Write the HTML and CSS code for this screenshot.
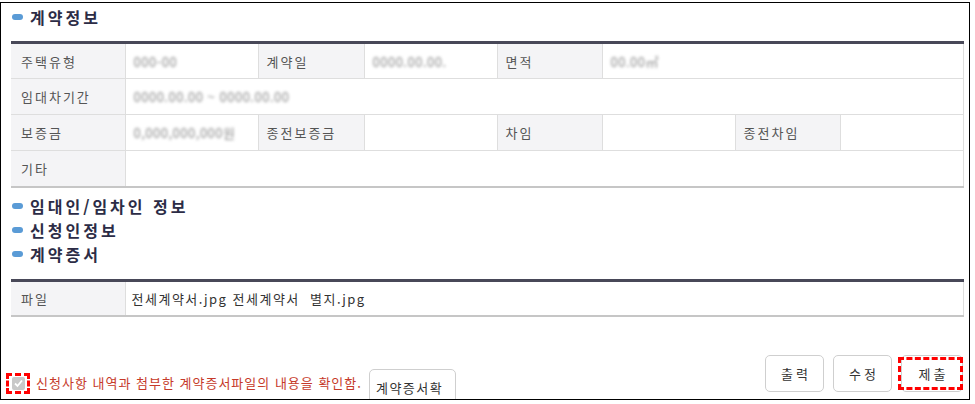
FILE: index.html
```html
<!DOCTYPE html>
<html lang="ko">
<head>
<meta charset="utf-8">
<link rel="stylesheet" href="styles.css">
</head>
<body>
<div class="frame">
  <h2 class="sec first">계약정보</h2>
  <table class="grid">
    <colgroup>
      <col style="width:114px"><col style="width:133px"><col style="width:106px"><col style="width:133px">
      <col style="width:105px"><col style="width:133px"><col style="width:105px"><col style="width:123px">
    </colgroup>
    <tr>
      <th>주택유형</th><td><span class="blur">000-00</span></td>
      <th>계약일</th><td><span class="blur">0000.00.00.</span></td>
      <th>면적</th><td colspan="3"><span class="blur">00.00㎡</span></td>
    </tr>
    <tr>
      <th>임대차기간</th><td colspan="7"><span class="blur">0000.00.00 ~ 0000.00.00</span></td>
    </tr>
    <tr>
      <th>보증금</th><td><span class="blur">0,000,000,000원</span></td>
      <th>종전보증금</th><td></td>
      <th>차임</th><td></td>
      <th>종전차임</th><td></td>
    </tr>
    <tr>
      <th>기타</th><td colspan="7"></td>
    </tr>
  </table>
  <div class="secs">
    <h2 class="sec">임대인/임차인 정보</h2>
    <h2 class="sec">신청인정보</h2>
    <h2 class="sec">계약증서</h2>
  </div>
  <table class="grid files">
    <colgroup><col style="width:114px"><col style="width:838px"></colgroup>
    <tr><th>파일</th><td class="dark">전세계약서.jpg 전세계약서&nbsp; 별지.jpg</td></tr>
  </table>
  <div class="foot">
    <div class="confirm">
      <span class="mark"><span class="chk"><svg width="13" height="13" viewBox="0 0 13 13"><path d="M3 6.5 L5.5 9 L10 3.5" fill="none" stroke="#fff" stroke-width="1.8"/></svg></span></span>
      <span class="warn">신청사항 내역과 첨부한 계약증서파일의 내용을 확인함.</span>
      <button class="btn doc">계약증서확</button>
    </div>
    <div class="actions">
      <button class="btn">출력</button>
      <button class="btn">수정</button>
      <span class="hl"><button class="btn">제출</button><span class="dash"></span></span>
    </div>
  </div>
</div>
</body>
</html>
```
FILE: styles.css
```css
html, body { margin: 0; padding: 0; background: #fff; }
body {
  padding-top: 2px;
  font-family: "Noto Sans CJK KR", "Noto Sans", sans-serif;
  color: #555;
}
.frame {
  width: 958px;
  height: 396px;
  border: 1px solid #000;
  padding: 0 0 0 10px;
  overflow: hidden;
}
.sec {
  margin: 0;
  height: 24px;
  line-height: 24px;
  font-size: 16px;
  font-weight: bold;
  letter-spacing: 3px;
  color: #2c2c46;
  display: flex;
  align-items: center;
  margin-left: 1px;
}
.sec::before {
  content: "";
  width: 11px;
  height: 6px;
  border-radius: 3px;
  background: #5a9bd6;
  margin-right: 7px;
}
.sec.first { margin-top: 2px; }
.grid {
  border-collapse: collapse;
  table-layout: fixed;
  width: 952px;
  margin-top: 12px;
  border-top: 3px solid #484858;
  border-bottom: 2px solid #c6c6c6;
  font-size: 13px;
}
.grid th, .grid td {
  border: 1px solid #dedede;
  height: 36px;
  padding: 0 0 0 8px;
  text-align: left;
  font-weight: normal;
  box-sizing: border-box;
}
.grid tr:first-child th, .grid tr:first-child td { border-top: 0; }
.grid tr:last-child th, .grid tr:last-child td { border-bottom: 0; }
.grid th:first-child { border-left: 0; padding-left: 10px; }
.grid th {
  background: #f4f4f6;
  color: #555;
  letter-spacing: 2px;
}
.grid td { color: #444; }
.grid td.dark { color: #333; letter-spacing: 1.5px; padding-left: 6px; }
.blur {
  color: #8c8c8c;
  filter: blur(1.4px);
  letter-spacing: 0.5px;
}
.secs { margin-top: 6px; }
.files { margin-top: 13px; }
.files th, .files td { height: 36px; }
.foot {
  display: flex;
  justify-content: space-between;
  align-items: flex-start;
  margin-top: 38px;
  padding-right: 6px;
}
.confirm {
  display: flex;
  align-items: flex-start;
  margin-left: -5px;
  margin-top: 14px;
}
.mark {
  width: 18px;
  height: 15px;
  border: 3px dashed #f00;
  margin-top: 4px;
  display: flex;
  align-items: center;
  justify-content: center;
}
.chk {
  width: 13px;
  height: 13px;
  background: #c8c8c8;
  border-radius: 2px;
  display: block;
}
.chk svg { display: block; }
.warn {
  color: #c63a2a;
  font-size: 13px;
  letter-spacing: 1px;
  margin-left: 6px;
  margin-top: 5px;
  line-height: 18px;
  white-space: nowrap;
}
.btn {
  font-family: "Noto Sans CJK KR", "Noto Sans", sans-serif;
  font-size: 13px;
  color: #333;
  background: #fff;
  border: 1px solid #cfcfcf;
  border-radius: 5px;
  height: 37px;
  width: 59px;
  padding: 0;
  letter-spacing: 3px;
  text-indent: 3px;
}
.btn.doc {
  width: 87px;
  margin-left: 7px;
  text-align: left;
  padding-left: 6px;
  text-indent: 0;
  letter-spacing: 1.5px;
  white-space: nowrap;
  overflow: hidden;
}
.actions {
  display: flex;
  gap: 9px;
}
.hl {
  position: relative;
  display: block;
  margin-left: -3px;
}
.hl .btn { width: 62px; margin-left: 3px; }
.dash {
  position: absolute;
  left: 0;
  top: 2px;
  width: 59px;
  height: 27px;
  border: 3px dashed #f00;
}
```
